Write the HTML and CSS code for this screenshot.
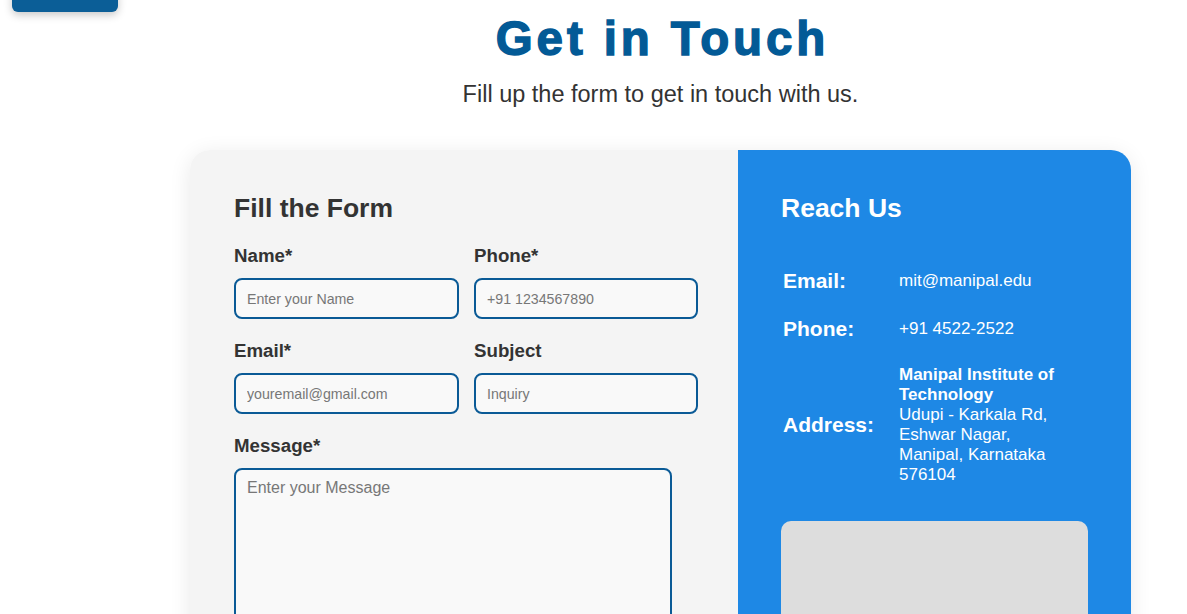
FILE: index.html
```html
<!DOCTYPE html>
<html lang="en">
<head>
<meta charset="utf-8">
<title>Get in Touch</title>
<link rel="stylesheet" href="styles.css">
</head>
<body>
<a class="back-btn" href="#" aria-label="Back"></a>
<div class="layout">
  <aside class="side"></aside>
  <main class="main">
    <h1 class="title">Get in Touch</h1>
    <p class="subtitle">Fill up the form to get in touch with us.</p>
    <section class="card">
      <div class="form-panel">
        <h2 class="panel-title">Fill the Form</h2>
        <form class="form-grid">
          <div class="field">
            <label class="label">Name*</label>
            <input class="input" type="text" placeholder="Enter your Name">
          </div>
          <div class="field">
            <label class="label">Phone*</label>
            <input class="input" type="text" placeholder="+91 1234567890">
          </div>
          <div class="field">
            <label class="label">Email*</label>
            <input class="input" type="text" placeholder="youremail@gmail.com">
          </div>
          <div class="field">
            <label class="label">Subject</label>
            <input class="input" type="text" placeholder="Inquiry">
          </div>
          <div class="field field-wide">
            <label class="label">Message*</label>
            <textarea class="textarea" placeholder="Enter your Message"></textarea>
          </div>
        </form>
      </div>
      <div class="info-panel">
        <h2 class="panel-title light">Reach Us</h2>
        <div class="info-grid">
          <div class="info-key">Email:</div>
          <div class="info-val">mit@manipal.edu</div>
          <div class="info-key">Phone:</div>
          <div class="info-val">+91 4522-2522</div>
          <div class="info-key">Address:</div>
          <div class="info-val"><strong>Manipal Institute of Technology</strong><br>Udupi - Karkala Rd, Eshwar Nagar, Manipal, Karnataka 576104</div>
        </div>
        <div class="map"></div>
      </div>
    </section>
  </main>
</div>
</body>
</html>
```

FILE: styles.css
```css
* { box-sizing: border-box; }

html, body {
  margin: 0;
  padding: 0;
  background: #ffffff;
  font-family: "Liberation Sans", Arial, sans-serif;
  color: #333333;
  overflow: hidden;
}

.back-btn {
  position: fixed;
  top: -30px;
  left: 12px;
  width: 106px;
  height: 42px;
  background: #0b5e97;
  border-radius: 6px;
  box-shadow: 0 3px 8px rgba(0, 0, 0, 0.22);
  z-index: 5;
}

.layout {
  display: flex;
}

.side {
  width: 134px;
  flex: 0 0 134px;
}

.main {
  flex: 1;
  display: flex;
  flex-direction: column;
  align-items: center;
}

.title {
  margin: 7.5px 0 0;
  padding-left: 4px;
  font-size: 47.5px;
  line-height: 62px;
  font-weight: 700;
  color: #035a96;
  letter-spacing: 3.9px;
  -webkit-text-stroke: 1.4px #035a96;
}

.subtitle {
  margin: 11.5px 0 0;
  font-size: 23.5px;
  line-height: 27px;
  color: #333333;
}

.card {
  margin-top: 42px;
  width: 941px;
  display: flex;
  border-radius: 20px;
  box-shadow: 0 4px 22px rgba(0, 0, 0, 0.09);
  height: 560px;
}

.form-panel {
  width: 548px;
  flex: 0 0 548px;
  background: #f4f4f4;
  border-radius: 20px 0 0 20px;
  padding: 43px 40px 0 44px;
}

.panel-title {
  margin: 0;
  font-size: 26.5px;
  line-height: 30.5px;
  font-weight: 700;
  color: #333333;
}

.panel-title.light {
  color: #ffffff;
}

.form-grid {
  margin-top: 21.5px;
  display: grid;
  grid-template-columns: 225px 224px;
  column-gap: 15px;
  row-gap: 21px;
}

.field {
  display: flex;
  flex-direction: column;
}

.field-wide {
  grid-column: 1 / -1;
}

.label {
  font-size: 18.7px;
  line-height: 21.5px;
  font-weight: 700;
  color: #333333;
  margin-bottom: 11.5px;
}

.input {
  height: 41px;
  width: 100%;
  border: 2px solid #0a5a96;
  border-radius: 8px;
  background: #f9f9f9;
  padding: 0 11px;
  font-family: "Liberation Sans", Arial, sans-serif;
  font-size: 14.2px;
  color: #333333;
  outline: none;
}

.textarea {
  width: 438px;
  height: 200px;
  border: 2px solid #0a5a96;
  border-radius: 8px;
  background: #f9f9f9;
  padding: 9px 11px;
  font-family: "Liberation Sans", Arial, sans-serif;
  font-size: 16px;
  color: #333333;
  resize: none;
  outline: none;
}

.input::placeholder,
.textarea::placeholder {
  color: #777777;
}

.info-panel {
  flex: 1;
  background: #1e88e5;
  border-radius: 0 20px 20px 0;
  padding: 43px 43px 0 43px;
  color: #ffffff;
}

.info-grid {
  margin-top: 34.5px;
  margin-left: 2px;
  display: grid;
  grid-template-columns: 116px 172px;
  row-gap: 2px;
  align-items: center;
}

.info-key {
  font-size: 21px;
  line-height: 24px;
  font-weight: 700;
  padding: 11px 0;
}

.info-val {
  font-size: 17px;
  line-height: 20px;
  padding: 11px 0;
}

.info-val strong {
  font-weight: 700;
}

.map {
  margin-top: 25px;
  width: 307px;
  height: 300px;
  background: #dddddd;
  border-radius: 10px;
}
```
